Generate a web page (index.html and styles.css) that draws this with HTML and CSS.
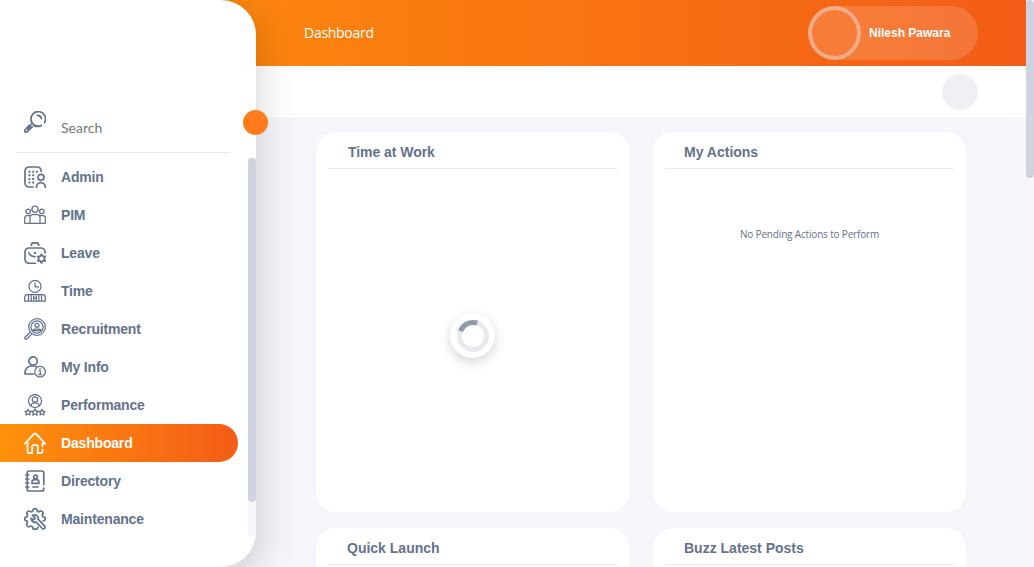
FILE: index.html
```html
<!DOCTYPE html>
<html lang="en">
<head>
<meta charset="utf-8">
<title>Dashboard</title>
<link rel="stylesheet" href="styles.css">
</head>
<body>
<div class="shell">
  <aside class="sidebar">
    <div class="search">
      <svg class="icon" viewBox="0 0 22 22"><path d="M20.5 11.6A7.3 7.3 0 1 0 17.5 14.4M15.7 15.2Q12.5 16 9.8 14.4M13.4 4.4Q16.8 4.6 17.4 7.6M7.7 12.8 5.9 14.8M5 14.5 1.2 18.7C-.2 20.6 1.8 22.1 3.3 20.7L8.2 15.8M3.8 18.2 6.4 15.5"/></svg>
      <span class="search-text">Search</span>
    </div>
    <div class="menu-area">
      <nav class="menu">
        <a class="item"><svg class="icon" viewBox="0 0 22 22"><path d="M9 21H5A4 4 0 0 1 1 17V5A4 4 0 0 1 5 1H13Q17 1 17.2 5.5"/><circle cx="17" cy="11.3" r="3"/><path d="M12.5 21.5V21A4.4 4.4 0 0 1 21.3 21V21.5"/><path class="dots" d="M4.4 5.7h9.5M4.4 9.2h6M4.4 12.9h6M4.4 16.5h6"/></svg><span>Admin</span></a>
        <a class="item"><svg class="icon thin" viewBox="0 0 22 22"><circle cx="11" cy="5.2" r="3.1"/><circle cx="4.2" cy="7.4" r="2.2"/><circle cx="17.8" cy="7.4" r="2.2"/><path d="M6 19.3V13Q6 10.5 8.5 10.5H13.5Q16 10.5 16 13V19.3ZM6 19.3H.7V14Q.7 11.7 3 11.7H6M16 19.3H21.3V14Q21.3 11.7 19 11.7H16"/></svg><span>PIM</span></a>
        <a class="item"><svg class="icon" viewBox="0 0 22 22"><path d="M7.3 3.2Q7.3.8 10 .8H12Q14.7.8 14.7 3.2M11.5 21.3H5A4 4 0 0 1 1 17.3V10A4 4 0 0 1 5 6H17A4 4 0 0 1 21 10V11M4.8 10.8Q6.8 14.9 11 14.6"/><path class="dots" d="M10 11h2"/><path d="M17.5 12.2 18.8 14.4H21.3L20 16.6 21.3 18.8H18.8L17.5 21 16.2 18.8H13.7L15 16.6 13.7 14.4H16.2Z"/></svg><span>Leave</span></a>
        <a class="item"><svg class="icon thin" viewBox="0 0 22 22"><circle cx="11" cy="6.4" r="6"/><path d="M11 2.8V6.8H14.5M.7 21.2V17.5Q.7 14.7 3.5 14.7H18.5Q21.3 14.7 21.3 17.5V21.2ZM4.5 15V21M17.5 15V21M7.2 15V21M14.8 15V21M9.7 16V20M12.3 16V20M9.7 18H12.3"/></svg><span>Time</span></a>
        <a class="item"><svg class="icon thin" viewBox="0 0 22 22"><circle cx="13" cy="9" r="8.3"/><circle cx="13" cy="9" r="6.1"/><circle cx="13" cy="7.3" r="2"/><path d="M8.9 12.4Q9 11 10.5 11H15.5Q17 11 17.1 12.4M9 12.5H17M6.2 14.2 1 19.2Q.3 20.4 1.2 21.1 2 21.7 3 20.8L8 15.9"/></svg><span>Recruitment</span></a>
        <a class="item"><svg class="icon" viewBox="0 0 22 22"><circle cx="9" cy="5" r="4.2"/><path d="M9.7 18H1V16.5Q1.7 10.5 7 10H10.5Q11.6 10.2 12.3 10.8"/><g class="thin"><circle cx="16.1" cy="15.7" r="5.3"/><path d="M15 14.8H16.3V18.5M14.7 18.5H17.8M16 12.3V13.2"/></g></svg><span>My Info</span></a>
        <a class="item"><svg class="icon thin" viewBox="0 0 22 22"><circle cx="11" cy="7" r="6.5"/><circle cx="11" cy="5.5" r="2.7"/><path d="M7 11.8Q7 8.8 11 8.8T15 11.8"/><path d="M11 14.8 12.1 17H14.4L12.7 18.7 13.2 21.2 11 20 8.8 21.2 9.3 18.7 7.6 17H9.9ZM4 15.4 5 17.3H7L5.6 18.8 6 21 4 20 2 21 2.4 18.8 1 17.3H3ZM18 15.4 19 17.3H21L19.6 18.8 20 21 18 20 16 21 16.4 18.8 15 17.3H17Z"/></svg><span>Performance</span></a>
        <a class="item active"><svg class="icon" viewBox="0 0 22 22"><path d="M3.5 9.5V19.7Q3.5 21.2 5 21.2H8.2V14.5Q8.2 13.2 9.5 13.2H12.5Q13.8 13.2 13.8 14.5V21.2H17Q18.5 21.2 18.5 19.7V17.5M.9 11.6 10 1.8Q11 .8 12 1.8L21.1 11.6H18.5V14.5"/></svg><span>Dashboard</span></a>
        <a class="item"><svg class="icon" viewBox="0 0 22 22"><path d="M19.8 14.5V3Q19.8 1 17.8 1H5.2Q3.2 1 3.2 3V19Q3.2 21 5.2 21H17.8Q19.8 21 19.8 19V18M1.8 5H4.7M1.8 9H4.7M1.8 13H4.7M1.8 17H4.7M9 17H14"/><circle cx="11.5" cy="7" r="1.8"/><path d="M8 13.3V12Q8 9.7 11.5 9.7T15 12V13.3Z"/></svg><span>Directory</span></a>
        <a class="item"><svg class="icon" viewBox="0 0 22 22"><path d="M14 19.2 13 21.1H9.2L8.5 18.7 6.8 18Q3.8 19.8 2.8 17.2 2.2 16.2 3.5 14.4L3 12.9Q.8 12.7.8 11.5V10Q.9 9.1 3 8.8L3.7 7Q2.2 5.1 3.2 4.1 4.8 2 7 3.9L8.7 3.2Q9 .9 10 .9H12Q13 .9 13.2 3.2L15 3.9Q17.1 2 18.6 4 19.8 5.1 18.1 7L18.8 8.8Q21.2 9.1 21.2 10V11.8Q21 12.8 18.9 13"/><path d="M8.5 7.3Q12.4 5.9 14.3 9.3L14.2 11.3 20.8 18.2Q21.5 20.9 18.8 21L12.2 14.2Q8 15.2 7 10.3L9.3 12 11.2 10.2Z"/></svg><span>Maintenance</span></a>
      </nav>
      <div class="menu-track"><div class="menu-thumb"></div></div>
    </div>
    <div class="toggle"></div>
  </aside>
  <main class="main">
    <header class="header">
      <h1 class="title">Dashboard</h1>
      <div class="user"><div class="avatar"></div><span class="name">Nilesh Pawara</span></div>
    </header>
    <div class="toolbar"><div class="help"></div></div>
    <div class="cards">
      <section class="card"><h2 class="heading first">Time at Work</h2>
        <div class="loading"><div class="loader"><svg class="ring" viewBox="0 0 32 32"><circle class="ring-base" cx="16" cy="16" r="13.5"/><path class="ring-arc" d="M3.4 11.2A13.5 13.5 0 0 1 20.2 3.2"/></svg></div></div>
      </section>
      <section class="card"><h2 class="heading">My Actions</h2><p class="empty">No Pending Actions to Perform</p></section>
      <section class="card"><h2 class="heading">Quick Launch</h2></section>
      <section class="card"><h2 class="heading">Buzz Latest Posts</h2></section>
    </div>
  </main>
  <div class="page-track"><div class="page-thumb"></div></div>
</div>
</body>
</html>
```
FILE: styles.css
```css
* { box-sizing: border-box; }
body { margin: 0; overflow: hidden; background: #f5f5fb; color: #64728c; font: 14px "Liberation Sans", Arial, sans-serif; }
.shell { display: flex; height: 567px; }
.sidebar { position: relative; z-index: 2; flex: 0 0 256px; height: 567px; padding-top: 104px; background: #fff; border-radius: 0 35px 35px 0; box-shadow: 2px 10px 38px rgba(0, 0, 0, .18); }
.search { display: flex; gap: 15px; width: 214px; height: 49px; margin-left: 16px; padding: 7px 8px 0; border-bottom: 1px solid #e8eaef; }
.search-text { padding-top: 8px; font: 14px/18px Lato, sans-serif; color: #777; }
.icon { flex: none; width: 22px; height: 22px; fill: none; stroke: currentColor; stroke-width: 1.7; stroke-linecap: round; stroke-linejoin: round; }
.thin { stroke-width: 1.25; }
.dots { stroke-width: 2; stroke-linecap: butt; stroke-dasharray: 2 1.8; }
.menu-area { display: flex; justify-content: space-between; padding-top: 5px; }
.menu { width: 238px; }
.item { display: flex; align-items: center; gap: 15px; height: 38px; padding-left: 24px; font-weight: 700; letter-spacing: -.18px; }
.active { color: #fff; background: linear-gradient(90deg, #ff920b, #f35c17); border-radius: 0 19px 19px 0; }
.menu-track { width: 8px; height: 379px; background: #f5f5fb; }
.menu-thumb { height: 344px; background: #cfd3df; border-radius: 4px; }
.toggle { position: absolute; right: -12px; top: 110px; width: 25px; height: 25px; border-radius: 50%; background: #ff7b1d; }
.main { flex: 1; min-width: 0; margin-left: -256px; }
.header { display: flex; align-items: center; justify-content: space-between; height: 66px; padding: 0 48px 0 304px; background: linear-gradient(90deg, #ff920b, #f35c17); color: #fff; }
.title { margin: 0; padding-bottom: 1px; font: 500 14px "Open Sans", sans-serif; letter-spacing: -.28px; }
.user { display: flex; align-items: center; gap: 8px; width: 170px; height: 54px; border-radius: 27px; background: rgba(255, 255, 255, .15); }
.avatar { width: 53px; height: 54px; border: 4px solid rgba(233, 218, 220, .5); border-radius: 50%; }
.name { font-size: 12px; font-weight: 700; }
.toolbar { display: flex; justify-content: flex-end; align-items: center; height: 53px; padding: 0 48px 1px 0; background: #fff; border-bottom: 1px solid #eff0f3; }
.help { width: 36px; height: 36px; border-radius: 50%; background: #eff0f3; }
.cards { display: grid; grid-template-columns: 313px 313px; grid-auto-rows: 380px; gap: 16px 24px; padding: 13px 0 0 316px; height: 448px; overflow: hidden; }
.card { padding: 0 12px; border-radius: 20px; background: #fff; }
.heading { margin: 0; height: 37px; padding: 12px 0 0 19px; font-size: 14px; line-height: 16px; border-bottom: 1px solid #e8eaef; }
.first { padding-left: 20px; letter-spacing: -.05px; }
.loading { display: flex; justify-content: center; padding-top: 144px; }
.loader { display: flex; align-items: center; justify-content: center; width: 45px; height: 45px; border-radius: 50%; background: #fff; box-shadow: 0 4px 12px rgba(0, 0, 0, .17); }
.ring { width: 32px; height: 32px; fill: none; stroke-width: 5; }
.ring-base { stroke: #e8eaef; }
.ring-arc { stroke: #929baa; }
.empty { margin: 57px 0 0; text-align: center; font: 10px/17px "Open Sans", sans-serif; letter-spacing: -.17px; }
.page-track { flex: 0 0 8px; background: #f5f5fb; }
.page-thumb { height: 178px; border-radius: 4px; background: #cfd3df; }
```
